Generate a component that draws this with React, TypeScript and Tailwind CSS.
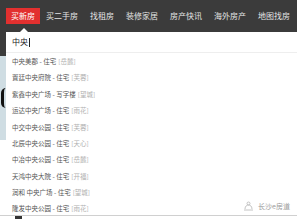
import React from 'react';

const navItems = ['买二手房', '找租房', '装修家居', '房产快讯', '海外房产', '地图找房'];

const suggestions = [
    { name: '中央美郡', type: '住宅', area: '岳麓' },
    { name: '置廷中央府院', type: '住宅', area: '芙蓉' },
    { name: '紫鑫中央广场', type: '写字楼', area: '望城' },
    { name: '运达中央广场', type: '住宅', area: '雨花' },
    { name: '中交中央公园', type: '住宅', area: '芙蓉' },
    { name: '北辰中央公园', type: '住宅', area: '天心' },
    { name: '中冶中央公园', type: '住宅', area: '岳麓' },
    { name: '天鸿中央大院', type: '住宅', area: '开福' },
    { name: '润和 中央广场', type: '住宅', area: '望城' },
    { name: '隆发中央公园', type: '住宅', area: '雨花' },
];

export default function App() {
    return (
        <div className="relative w-[297px] h-[219px] overflow-hidden bg-white font-['Noto_Sans_CJK_SC','Noto_Sans',sans-serif]">
            {/* top nav */}
            <div className="relative flex h-[32px] items-center bg-[#3b3b3b] pl-[6px]">
                <div className="flex h-[16px] items-center bg-[#e2302f] px-[5px] text-[8px] leading-none text-white">
                    买新房
                </div>
                {navItems.map((item) => (
                    <div key={item} className="px-[6px] text-[8px] leading-none text-[#e4e4e4]">
                        {item}
                    </div>
                ))}
                <div className="absolute bottom-0 left-[20px] h-0 w-0 border-x-[4px] border-b-[4px] border-x-transparent border-b-white" />
            </div>

            <div className="flex h-[187px]">
                {/* page behind the dropdown */}
                <div className="flex w-[6px] flex-col">
                    <div className="h-[24px] bg-[#3b3b3b]" />
                    <div className="flex h-[84px] items-center bg-[#cfdde3]">
                        <div className="ml-[1px] h-[20px] w-[6px] rounded-l-full border-l-[3px] border-[#111]" />
                    </div>
                </div>

                {/* dropdown */}
                <div className="flex flex-1 flex-col">
                    <div className="flex h-[21px] items-center border-b border-[#eeeeee] pl-[6px]">
                        <span className="text-[8px] leading-none text-[#222]">中央</span>
                        <span className="ml-[1px] h-[9px] w-px bg-[#222]" />
                    </div>
                    <ul className="flex flex-col">
                        {suggestions.map((s) => (
                            <li key={s.name} className="flex h-[16.4px] items-center pl-[6px] text-[6.5px] leading-none text-[#555]">
                                <span>{s.name} - {s.type}</span>
                                <span className="ml-[2px] text-[#b0b0b0]">[{s.area}]</span>
                            </li>
                        ))}
                    </ul>
                </div>
            </div>

            {/* bottom edge */}
            <div className="absolute bottom-[3px] left-0 right-0 border-t border-[#d0d0d0]" />
            <div className="absolute bottom-0 left-[15px] h-[3px] w-[7px] bg-[#333]" />

            {/* watermark */}
            <div className="absolute bottom-[8px] right-[7px] flex items-center gap-[4px] text-[#9a9a9a]">
                <svg width="11" height="10" viewBox="0 0 11 10" fill="none" stroke="#b5b5b5" strokeWidth="0.8">
                    <path d="M2 8 C2 5 4 4 5.5 4 C7 4 9 5 9 8" />
                    <circle cx="5.5" cy="2.5" r="1.5" />
                    <path d="M1 9 H10" />
                </svg>
                <span className="text-[7px] leading-none">长沙e房道</span>
            </div>
        </div>
    );
}
